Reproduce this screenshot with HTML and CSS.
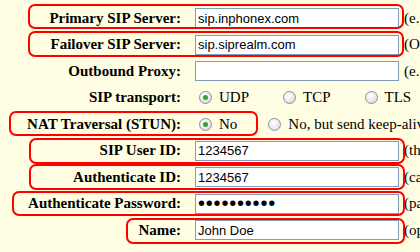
FILE: index.html
```html
<!DOCTYPE html>
<html>
<head>
<meta charset="utf-8">
<link rel="stylesheet" href="styles.css">
</head>
<body>
<div class="sheet">
  <form class="form">
    <label class="lbl">Primary SIP Server:</label>
    <div class="cell"><input class="txt" type="text" value="sip.inphonex.com"></div>
    <div class="hint">(e.g. sip.inphonex.com)</div>

    <label class="lbl">Failover SIP Server:</label>
    <div class="cell"><input class="txt" type="text" value="sip.siprealm.com"></div>
    <div class="hint">(Optional)</div>

    <label class="lbl">Outbound Proxy:</label>
    <div class="cell"><input class="txt" type="text" value=""></div>
    <div class="hint">(e.g. proxy.inphonex.com)</div>

    <label class="lbl">SIP transport:</label>
    <div class="cell radios wide">
      <span class="opt"><span class="radio on"></span><span class="rt">UDP</span></span>
      <span class="opt"><span class="radio"></span><span class="rt">TCP</span></span>
      <span class="opt"><span class="radio"></span><span class="rt">TLS</span></span>
    </div>
    <div class="hint"></div>

    <label class="lbl">NAT Traversal (STUN):</label>
    <div class="cell radios narrow">
      <span class="opt"><span class="radio on"></span><span class="rt">No</span></span>
      <span class="opt"><span class="radio"></span><span class="rt">No, but send keep-alive</span></span>
    </div>
    <div class="hint"></div>

    <label class="lbl">SIP User ID:</label>
    <div class="cell"><input class="txt" type="text" value="1234567"></div>
    <div class="hint">(the phone number)</div>

    <label class="lbl">Authenticate ID:</label>
    <div class="cell"><input class="txt" type="text" value="1234567"></div>
    <div class="hint">(can be same as user id)</div>

    <label class="lbl">Authenticate Password:</label>
    <div class="cell"><input class="txt pw" type="password" value="1234567890"></div>
    <div class="hint">(password)</div>

    <label class="lbl">Name:</label>
    <div class="cell"><input class="txt" type="text" value="John Doe"></div>
    <div class="hint">(optional)</div>
  </form>

  <div class="hl hl-primary"></div>
  <div class="hl hl-failover"></div>
  <div class="hl hl-nat"></div>
  <div class="hl hl-userid"></div>
  <div class="hl hl-authid"></div>
  <div class="hl hl-pass"></div>
  <div class="hl hl-name"></div>
</div>
</body>
</html>
```

FILE: styles.css
```css
html, body {
  margin: 0;
  padding: 0;
  background: #fffde2;
  overflow: hidden;
}
.sheet {
  position: relative;
  width: 420px;
  height: 252px;
  overflow: hidden;
}
.form {
  display: grid;
  grid-template-columns: 195px 210px max-content;
  grid-auto-rows: 26.5px;
  padding-top: 5px;
  margin: 0;
}
.lbl {
  display: flex;
  align-items: center;
  justify-content: flex-end;
  padding-right: 14px;
  font-family: "Liberation Serif", "Times New Roman", serif;
  font-weight: bold;
  font-size: 15px;
  color: #000;
  white-space: nowrap;
}
.cell {
  display: flex;
  align-items: center;
}
.txt {
  box-sizing: border-box;
  width: 204px;
  height: 20px;
  margin: 0;
  padding: 0 2px;
  border: 1px solid #7f9db9;
  background: #fff;
  font-family: "Liberation Sans", Arial, sans-serif;
  font-size: 13px;
  color: #000;
  outline: none;
}
.pw {
  font-size: 20px;
  letter-spacing: 0.8px;
  padding-top: 0;
  padding-bottom: 0;
}
.hint {
  display: flex;
  align-items: center;
  font-family: "Liberation Serif", "Times New Roman", serif;
  font-size: 15px;
  white-space: nowrap;
  margin-left: -1px;
}
.radios {
  padding-left: 4px;
  white-space: nowrap;
  font-family: "Liberation Serif", "Times New Roman", serif;
  font-size: 15px;
}
.opt {
  display: inline-flex;
  align-items: center;
  gap: 7px;
}
.wide .opt { margin-right: 34px; }
.narrow .opt { margin-right: 31px; }
.radio {
  box-sizing: border-box;
  width: 13px;
  height: 13px;
  border-radius: 50%;
  border: 1px solid #8a8f98;
  background: radial-gradient(circle at 40% 35%, #ffffff 0%, #ececec 50%, #cfd0cc 100%);
  position: relative;
  flex: none;
}
.radio.on::after {
  content: "";
  position: absolute;
  left: 3px;
  top: 3px;
  width: 5px;
  height: 5px;
  border-radius: 50%;
  background: #3f9b3a;
}
.rt { color: #000; }

.hl {
  position: absolute;
  box-sizing: border-box;
  border: 2px solid #ff0000;
  border-radius: 7px;
  pointer-events: none;
}
.hl-primary { left: 28px; top: 4px; width: 376px; height: 25px; }
.hl-failover { left: 28px; top: 31px; width: 376px; height: 26px; }
.hl-nat { left: 9px; top: 111px; width: 249px; height: 25px; }
.hl-userid { left: 29px; top: 138px; width: 376px; height: 26px; }
.hl-authid { left: 29px; top: 164px; width: 376px; height: 26px; }
.hl-pass { left: 12px; top: 191px; width: 393px; height: 25px; }
.hl-name { left: 126px; top: 218px; width: 279px; height: 26px; }
```
